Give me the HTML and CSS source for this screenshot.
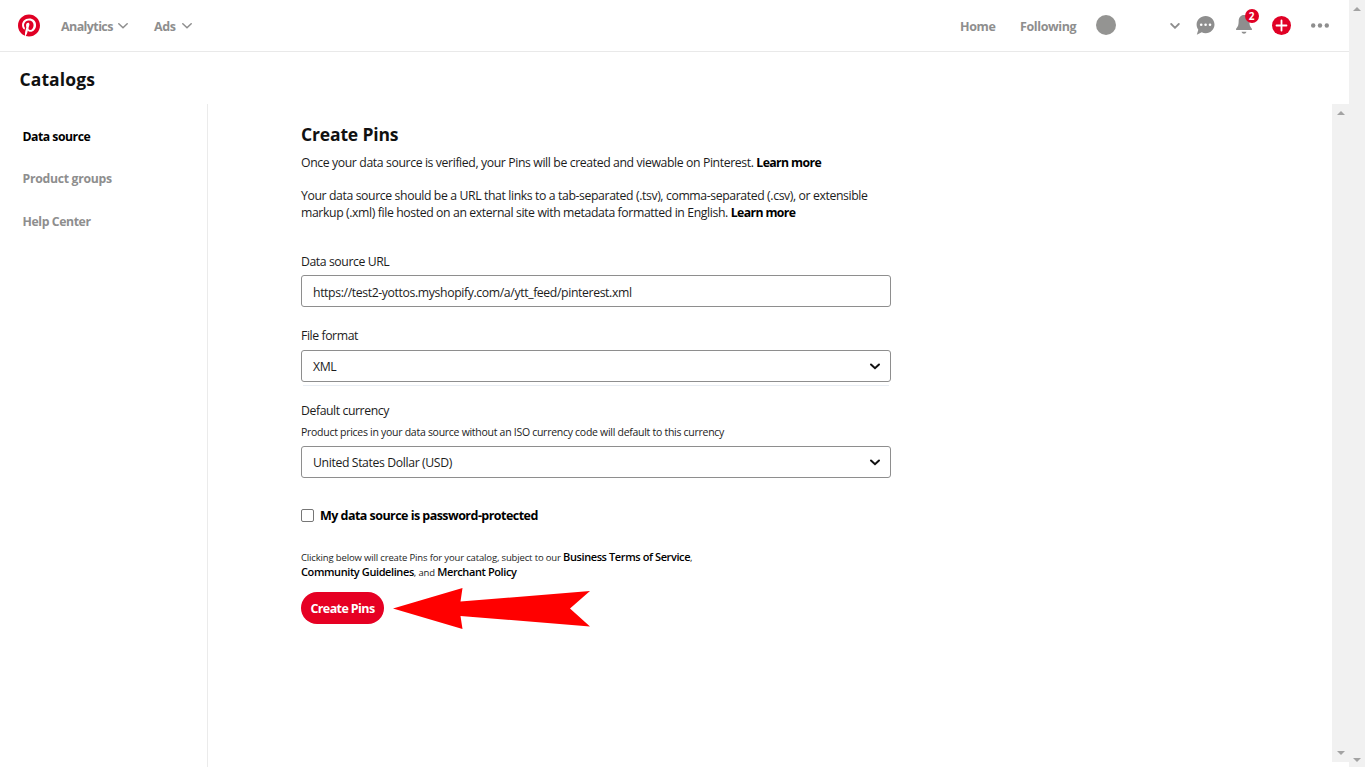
FILE: index.html
```html
<!DOCTYPE html>
<html lang="en">
<head>
<meta charset="utf-8">
<title>Catalogs</title>
<link rel="stylesheet" href="styles.css">
</head>
<body>
<div class="page">
  <header class="header">
    <svg class="logo" viewBox="0 0 24 24"><circle cx="12" cy="12" r="12" fill="#fff"/><path fill="#e00025" d="M0 12c0 5.123 3.211 9.497 7.73 11.218-.11-.937-.227-2.482.025-3.566.217-.932 1.401-5.938 1.401-5.938s-.357-.715-.357-1.774c0-1.66.962-2.9 2.161-2.9 1.02 0 1.512.765 1.512 1.682 0 1.025-.653 2.557-.99 3.978-.281 1.189.597 2.159 1.769 2.159 2.123 0 3.756-2.239 3.756-5.471 0-2.861-2.056-4.86-4.991-4.86-3.398 0-5.393 2.549-5.393 5.184 0 1.027.395 2.127.889 2.726a.36.36 0 0 1 .083.343c-.091.378-.293 1.189-.332 1.355-.053.218-.173.265-.4.159-1.492-.694-2.424-2.875-2.424-4.627 0-3.769 2.737-7.229 7.892-7.229 4.144 0 7.365 2.953 7.365 6.899 0 4.117-2.595 7.431-6.199 7.431-1.211 0-2.348-.63-2.738-1.373 0 0-.599 2.282-.744 2.84-.282 1.084-1.064 2.456-1.549 3.235C9.584 23.815 10.77 24 12 24c6.627 0 12-5.373 12-12S18.627 0 12 0 0 5.373 0 12"/></svg>
    <nav class="nav">
      <span class="nav-item t-analytics">Analytics</span>
      <svg class="caret" viewBox="0 0 10 6"><path d="M.8.8 5 4.8 9.2.8"/></svg>
      <span class="nav-item t-ads">Ads</span>
      <svg class="caret" viewBox="0 0 10 6"><path d="M.8.8 5 4.8 9.2.8"/></svg>
    </nav>
    <div class="tools">
      <span class="nav-item t-home">Home</span>
      <span class="nav-item t-following">Following</span>
      <span class="avatar"></span>
      <svg class="caret-small" viewBox="0 0 10 6"><path d="M1.200 1 5 4.800 8.800 1"/></svg>
      <svg class="chat" viewBox="0 0 19 19"><path fill="#8e8e8e" d="M9.700 0C14.700 0 18.500 3.800 18.500 8.600s-3.800 8.600-8.800 8.600c-1.500 0-2.800-.3-4-.9L.8 18.700l1.500-5C1.200 12.200.6 10.500.6 8.600.6 3.800 4.700 0 9.700 0z"/><g fill="#fff"><circle cx="5.200" cy="8.700" r="1.300"/><circle cx="9.600" cy="8.700" r="1.300"/><circle cx="14" cy="8.700" r="1.300"/></g></svg>
      <span class="bell-wrap">
        <svg class="bell" viewBox="0 0 16 19"><path fill="#8e8e8e" d="M8 0c3.300 0 5.200 2.500 5.300 5.600.1 4.200.5 6.200 2.600 8.100v1.200H.1v-1.200c2.100-1.900 2.500-3.900 2.600-8.100C2.800 2.500 4.700 0 8 0zM5.500 16.800h5c-.4 1.300-1.300 2-2.500 2s-2.100-.7-2.500-2z"/></svg>
        <span class="badge">2</span>
      </span>
      <svg class="plus" viewBox="0 0 19 19"><circle cx="9.500" cy="9.500" r="9.500" fill="#e00025"/><path d="M9.500 4.500v10M4.500 9.500h10" stroke="#fff" stroke-width="1.800" stroke-linecap="round"/></svg>
      <svg class="dots" viewBox="0 0 18 5" fill="#8e8e8e"><circle cx="2.200" cy="2.500" r="2.200"/><circle cx="9" cy="2.500" r="2.200"/><circle cx="15.800" cy="2.500" r="2.200"/></svg>
    </div>
  </header>
  <h1 class="title">Catalogs</h1>
  <div class="body">
    <aside class="sidebar">
      <a class="side-item active">Data source</a>
      <a class="side-item groups">Product groups</a>
      <a class="side-item">Help Center</a>
    </aside>
    <main class="content">
      <h2 class="heading">Create Pins</h2>
      <p class="para intro">Once your data source is verified, your Pins will be created and viewable on Pinterest. <b>Learn more</b></p>
      <p class="para">Your data source should be a URL that links to a tab-separated (.tsv), comma-separated (.csv), or extensible<br>markup (.xml) file hosted on an external site with metadata formatted in English. <b>Learn more</b></p>
      <div class="field url">
        <label class="label">Data source URL</label>
        <div class="box url-box">https://test2-yottos.myshopify.com/a/ytt_feed/pinterest.xml</div>
      </div>
      <div class="field format">
        <label class="label">File format</label>
        <div class="box"><span>XML</span><svg class="arrow" viewBox="0 0 12 8"><path d="M2 1.500 6 5.200l4-3.700"/></svg></div>
        <div class="rule"></div>
      </div>
      <div class="field currency">
        <label class="label">Default currency</label>
        <div class="hint">Product prices in your data source without an ISO currency code will default to this currency</div>
        <div class="box"><span>United States Dollar (USD)</span><svg class="arrow" viewBox="0 0 12 8"><path d="M2 1.500 6 5.200l4-3.700"/></svg></div>
      </div>
      <div class="check"><span class="checkbox"></span><b>My data source is password-protected</b></div>
      <p class="terms">Clicking below will create Pins for your catalog, subject to our <b>Business Terms of Service</b>,<br><b>Community Guidelines</b>, and <b>Merchant Policy</b></p>
      <div class="actions">
        <button class="button">Create Pins</button>
        <svg class="pointer" viewBox="0 0 198 41"><path fill="#f00" d="M0 20.500 69.500 0 67.500 13.500 197 3 177 20.500 197 38.500 67.500 28 69.500 41z"/></svg>
      </div>
    </main>
    <div class="scrollbar inner"><i class="up"></i><i class="down"></i></div>
  </div>
</div>
<div class="scrollbar outer"><i class="up"></i><i class="down"></i></div>
</body>
</html>
```
FILE: styles.css
```css
* { box-sizing: border-box; }
body {
  margin: 0;
  display: flex;
  width: 1365px;
  height: 767px;
  overflow: hidden;
  background: #fff;
  color: #1c1c1c;
  font: 12.25px/17px "Open Sans", "Noto Sans", sans-serif;
  white-space: nowrap;
}
h1, h2, p { margin: 0; }
b { font-weight: 700; letter-spacing: -.6px; color: #000; }
svg { display: block; flex: none; }
.page { width: 1349px; height: 767px; display: flex; flex-direction: column; }
.header {
  height: 52px;
  flex: none;
  display: flex;
  align-items: center;
  justify-content: space-between;
  border-bottom: 1px solid #e9e9e9;
  padding: 0 20px 0 18px;
}
.logo { width: 22px; height: 23px; }
.nav { display: flex; align-items: center; margin: 0 auto 0 21px; }
.nav-item { color: #8e8e8e; font-weight: 700; font-size: 12.5px; letter-spacing: -.4px; padding-top: 2px; }
.caret { width: 10px; height: 6px; }
.t-analytics { width: 57px; letter-spacing: -.6px; }
.t-ads { width: 28px; margin-left: 26px; }
.caret path, .caret-small path { fill: none; stroke: #8e8e8e; stroke-width: 1.5; stroke-linecap: round; }
.caret-small path { stroke-width: 1.8; }
.tools { display: flex; align-items: center; }
.t-home { width: 60px; }
.t-following { width: 75px; }
.avatar { width: 20px; height: 20px; border-radius: 50%; background: #949492; margin: -1px 54.5px 0 .5px; }
.caret-small { width: 10px; height: 6px; margin-right: 16px; }
.chat { width: 19px; height: 19px; margin-right: 20.5px; }
.bell-wrap { position: relative; margin-right: 20.5px; top: -1px; }
.bell { width: 16px; height: 19px; }
.badge {
  position: absolute;
  left: 9px;
  top: -6px;
  width: 14px;
  height: 14px;
  border-radius: 50%;
  background: #e00025;
  color: #fff;
  font-size: 10px;
  font-weight: 700;
  line-height: 14px;
  text-align: center;
}
.plus { width: 19px; height: 19px; margin-right: 20px; }
.dots { width: 18px; height: 5px; }
.title { height: 52px; flex: none; padding: 15px 0 0 19.5px; font-size: 17.5px; line-height: 25px; font-weight: 700; color: #111; letter-spacing: .1px; }
.body { flex: 1; display: flex; min-height: 0; }
.sidebar { width: 208px; border-right: 1px solid #ebebeb; padding: 24.2px 0 0 22.5px; display: flex; flex-direction: column; gap: 25.25px; }
.side-item { font-weight: 700; color: #8e8e8e; letter-spacing: -.4px; }
.side-item.active { color: #000; letter-spacing: -.5px; }
.side-item.groups { letter-spacing: -.3px; }
.content { flex: 1; padding: 18px 0 0 93px; }
.heading { font-size: 17.5px; line-height: 25px; font-weight: 700; letter-spacing: -.15px; color: #111; }
.para { letter-spacing: -.39px; }
.intro { margin: 7px 0 16px; }
.field { width: 590px; }
.label { display: block; letter-spacing: -.42px; }
.url { margin-top: 32px; }
.format { margin-top: 20px; }
.format .box { margin-top: 6px; }
.currency { margin-top: 16px; }
.box {
  height: 32px;
  margin-top: 5px;
  border: 1px solid #8e8e8e;
  border-radius: 3px;
  padding: 1px 9px 0 11px;
  display: flex;
  align-items: center;
  justify-content: space-between;
  letter-spacing: -.38px;
}
.url-box { padding-top: 3px; }
.arrow { width: 12px; height: 8px; }
.arrow path { fill: none; stroke: #111; stroke-width: 2; stroke-linecap: round; }
.rule { height: 1px; margin: 3px 2px 0; background: #e8edf3; }
.hint { font-size: 10.5px; line-height: 15px; margin: 6px 0; letter-spacing: -.28px; }
.check { display: flex; align-items: center; gap: 6px; margin-top: 29px; }
.check b { font-size: 12.5px; letter-spacing: -.54px; }
.checkbox { width: 13px; height: 13px; border: 1px solid #767676; border-radius: 2px; margin-top: -1px; }
.terms { margin-top: 26px; font-size: 9.5px; line-height: 15px; letter-spacing: -.15px; }
.terms b { font-size: 11px; line-height: 12px; font-weight: 600; letter-spacing: -.4px; }
.actions { display: flex; align-items: flex-start; margin-top: 8px; }
.button { width: 83px; height: 32px; margin-top: 4px; border: 0; border-radius: 16px; padding: 0; background: #e60023; color: #fff; font: 700 12.5px/17px "Open Sans", sans-serif; letter-spacing: -.6px; }
.pointer { width: 198px; height: 41px; margin-left: 9px; }
.scrollbar { background: #f1f1f1; display: flex; flex-direction: column; justify-content: space-between; align-items: center; flex: none; }
.outer { width: 16px; height: 767px; padding: 7px 0 5px; }
.inner { width: 17px; height: 658px; padding: 7px 0; }
.up, .down { border: 4px solid transparent; border-top-width: 0; border-bottom-color: #a3a3a3; }
.down { border-width: 4px 4px 0; border-top-color: #a3a3a3; }
```
